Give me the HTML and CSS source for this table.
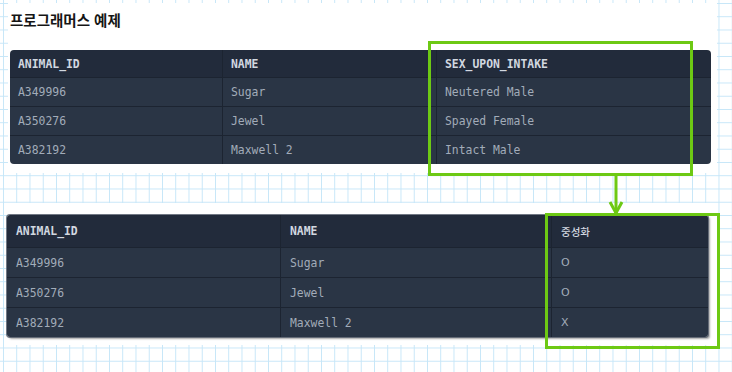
FILE: index.html
```html
<!DOCTYPE html>
<html lang="ko">
<head>
<meta charset="utf-8">
<title>프로그래머스 예제</title>
<link rel="stylesheet" href="styles.css">
</head>
<body>
<div class="page">
  <section class="panel panel-top">
    <h1 class="title">프로그래머스 예제</h1>
    <div class="table-wrap wrap-1">
      <table class="data t1">
        <colgroup><col class="t1-c1"><col class="t1-c2"><col class="t1-c3"></colgroup>
        <thead>
          <tr><th>ANIMAL_ID</th><th>NAME</th><th>SEX_UPON_INTAKE</th></tr>
        </thead>
        <tbody>
          <tr><td>A349996</td><td>Sugar</td><td>Neutered Male</td></tr>
          <tr><td>A350276</td><td>Jewel</td><td>Spayed Female</td></tr>
          <tr><td>A382192</td><td>Maxwell 2</td><td>Intact Male</td></tr>
        </tbody>
      </table>
    </div>
  </section>
  <section class="panel panel-bottom">
    <div class="table-wrap wrap-2">
      <table class="data t2">
        <colgroup><col class="t2-c1"><col class="t2-c2"><col class="t2-c3"></colgroup>
        <thead>
          <tr><th>ANIMAL_ID</th><th>NAME</th><th class="ko">중성화</th></tr>
        </thead>
        <tbody>
          <tr><td>A349996</td><td>Sugar</td><td class="sans">O</td></tr>
          <tr><td>A350276</td><td>Jewel</td><td class="sans">O</td></tr>
          <tr><td>A382192</td><td>Maxwell 2</td><td class="sans">X</td></tr>
        </tbody>
      </table>
    </div>
  </section>
  <div class="hl hl-1"></div>
  <div class="hl hl-2"></div>
  <svg class="arrow" width="16" height="40" viewBox="0 0 16 40">
    <line x1="8" y1="0" x2="8" y2="37" stroke="#6dc914" stroke-width="3"/>
    <polyline points="2,26 8,37 14,26" fill="none" stroke="#6dc914" stroke-width="3"/>
  </svg>
</div>
</body>
</html>
```
FILE: styles.css
```css
html, body {
  margin: 0;
  padding: 0;
}
body {
  width: 732px;
  height: 372px;
  overflow: hidden;
  background-color: #ffffff;
  background-image:
    linear-gradient(to right, #c6e6f8 1px, transparent 1px),
    linear-gradient(to bottom, #c6e6f8 1px, transparent 1px);
  background-size: 13.26px 13.26px;
  background-position: 3px 3px;
  font-family: "DejaVu Sans Mono", monospace;
}
.page {
  position: relative;
  width: 732px;
  height: 372px;
  padding-top: 3px;
  box-sizing: border-box;
}
.panel {
  background: #ffffff;
  margin-left: 8px;
  width: 709px;
  box-sizing: border-box;
}
.panel-top {
  height: 170px;
  padding: 7px 0 0 2px;
}
.panel-bottom {
  margin-top: 30px;
  height: 142px;
  padding: 12px 0 0 0;
}
.title {
  margin: 0;
  height: 20px;
  line-height: 20px;
  font-family: "Noto Sans CJK KR", "Noto Sans", sans-serif;
  font-weight: 700;
  font-size: 14.5px;
  color: #151515;
}
.table-wrap {
  width: 701px;
  overflow: hidden;
}
.wrap-1 {
  margin-top: 20px;
  border-radius: 4px;
}
.wrap-2 {
  margin-left: -1px;
  border-radius: 3px;
  box-shadow: 0 0 0 1px rgba(88, 96, 110, 0.85), 2px 2px 2px rgba(0, 0, 0, 0.35);
}
.data {
  width: 701px;
  table-layout: fixed;
  border-collapse: separate;
  border-spacing: 0;
  font-size: 11.4px;
}
.t1-c1 { width: 212px; }
.t1-c2 { width: 214px; }
.t1-c3 { width: 275px; }
.t2-c1 { width: 273px; }
.t2-c2 { width: 271px; }
.t2-c3 { width: 157px; }
.data th,
.data td {
  padding: 0 8px;
  text-align: left;
  vertical-align: middle;
  white-space: nowrap;
  border-bottom: 1px solid #1c2431;
}
.t2 th,
.t2 td {
  padding-left: 9px;
}
.data th + th,
.data td + td {
  border-left: 1px solid #1c2431;
}
.data th {
  background: #222b3b;
  color: #d2d8e0;
  font-weight: 700;
}
.data td {
  background: #2a3545;
  color: #a2acb9;
}
.data tbody tr:last-child td {
  border-bottom: none;
}
.t1 th { height: 27px; }
.t1 td { height: 28px; }
.t2 th { height: 32px; }
.t2 td { height: 29px; }
.data .ko {
  font-family: "Noto Sans CJK KR", "Noto Sans", sans-serif;
  font-weight: 500;
  font-size: 10.5px;
}
.data .sans {
  font-family: "DejaVu Sans", sans-serif;
  font-size: 11px;
}
.hl {
  position: absolute;
  border: 3px solid #6dc914;
  box-sizing: border-box;
}
.hl-1 {
  left: 428px;
  top: 41px;
  width: 265px;
  height: 135px;
}
.hl-2 {
  left: 545px;
  top: 213px;
  width: 175px;
  height: 136px;
}
.arrow {
  position: absolute;
  left: 608px;
  top: 176px;
}
```
